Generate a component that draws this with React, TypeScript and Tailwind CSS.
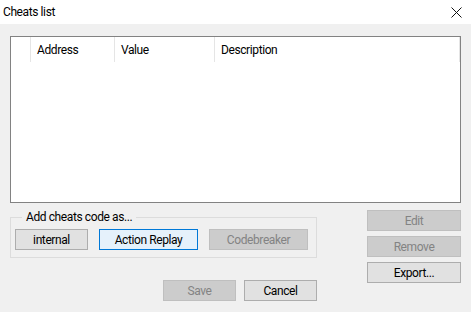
const btn =
  "h-[21px] border text-[12px] leading-none flex items-center justify-center";
const normal = "bg-[#e1e1e1] border-[#adadad] text-black";
const disabled = "bg-[#cccccc] border-[#bfbfbf] text-[#838383]";

export default function App() {
  return (
    <div
      className="w-[471px] h-[312px] bg-[#f0f0f0] flex flex-col text-black overflow-hidden tracking-[-0.4px]"
      style={{ fontFamily: 'Roboto, "Noto Sans", sans-serif' }}
    >
      {/* title bar */}
      <div className="h-[24px] bg-white flex items-center justify-between pl-[3px] pr-[8px]">
        <span className="text-[12px] leading-none">Cheats list</span>
        <svg width="11" height="11" viewBox="0 0 11 11" className="mr-[1px]">
          <path d="M0.5 0.5 L10.5 10.5 M10.5 0.5 L0.5 10.5" stroke="#111" strokeWidth="1" />
        </svg>
      </div>

      <div className="flex-1 flex flex-col px-[10px] pt-[12px]">
        {/* cheats list */}
        <div className="h-[167px] bg-white border border-[#828282]">
          <div className="h-[25px] flex text-[12px] text-black">
            <div className="w-[20px] border-r border-[#e5e5e5]" />
            <div className="w-[84px] border-r border-[#e5e5e5] pl-[6px] flex items-center">Address</div>
            <div className="w-[100px] border-r border-[#e5e5e5] pl-[6px] flex items-center">Value</div>
            <div className="flex-1 border-r border-[#e5e5e5] pl-[6px] flex items-center">Description</div>
          </div>
        </div>

        <div className="flex mt-[7px]">
          <div className="w-[308px] flex flex-col">
            <fieldset className="h-[48px] border border-[#dcdcdc] px-[4px]">
              <legend className="ml-[7px] px-[4px] text-[12px] leading-[14px]">
                Add cheats code as...
              </legend>
              <div className="flex gap-[11px] mt-[5px]">
                <button className={`${btn} ${normal} w-[73px]`}>internal</button>
                <button className={`${btn} w-[99px] bg-[#e5f1fb] border-[#0078d7]`}>Action Replay</button>
                <button className={`${btn} ${disabled} w-[99px]`}>Codebreaker</button>
              </div>
            </fieldset>
            <div className="flex justify-end gap-[8px] mt-[22px]">
              <button className={`${btn} ${disabled} w-[73px]`}>Save</button>
              <button className={`${btn} ${normal} w-[73px]`}>Cancel</button>
            </div>
          </div>

          <div className="ml-[50px] flex flex-col gap-[5px]">
            <button className={`${btn} ${disabled} w-[94px]`}>Edit</button>
            <button className={`${btn} ${disabled} w-[94px]`}>Remove</button>
            <button className={`${btn} ${normal} w-[94px]`}>Export...</button>
          </div>
        </div>
      </div>
    </div>
  );
}
